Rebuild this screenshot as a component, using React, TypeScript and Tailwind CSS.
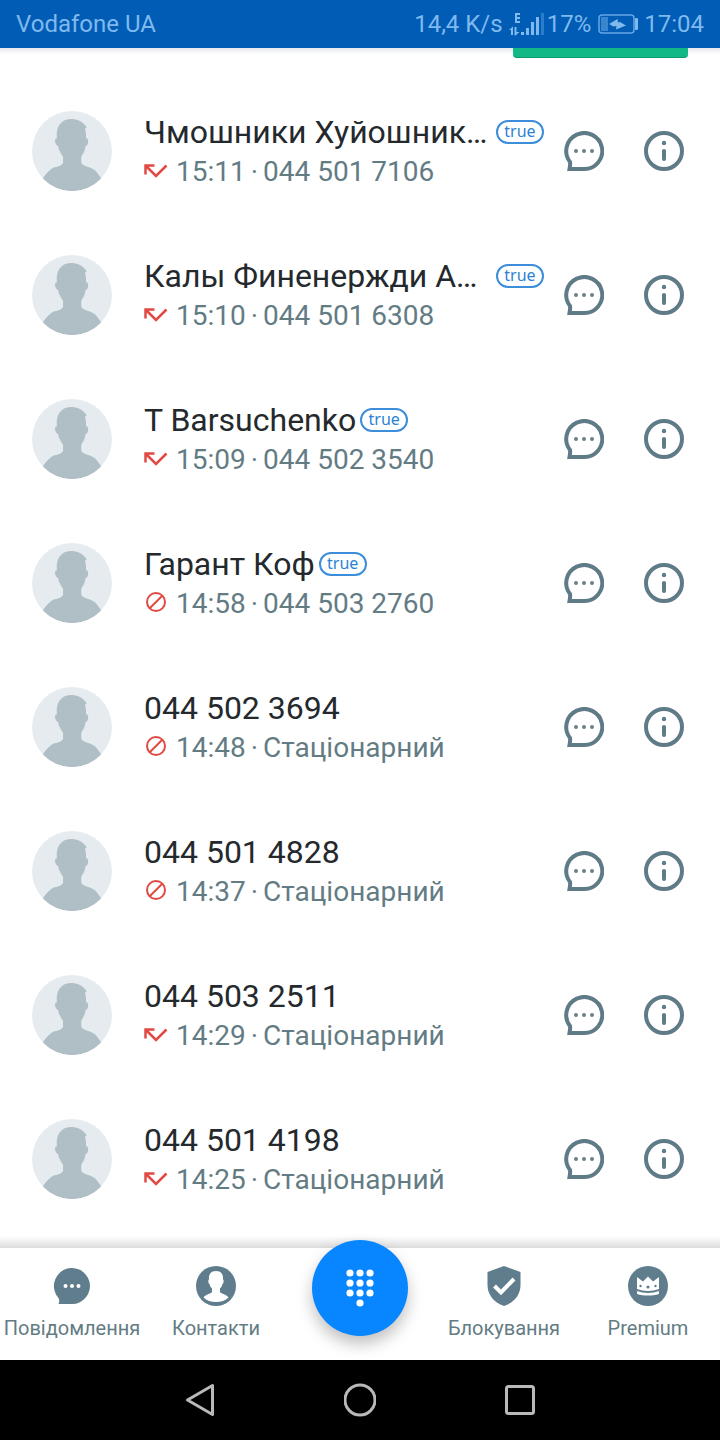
import type { ReactNode } from "react";

type CallKind = "missed" | "blocked";

interface Call {
  id: number;
  name: string;
  verified?: boolean;
  kind: CallKind;
  time: string;
  detail: string;
}

const calls: Call[] = [
  { id: 1, name: "Чмошники Хуйошник…", verified: true, kind: "missed", time: "15:11", detail: "044 501 7106" },
  { id: 2, name: "Калы Финенержди А…", verified: true, kind: "missed", time: "15:10", detail: "044 501 6308" },
  { id: 3, name: "T Barsuchenko", verified: true, kind: "missed", time: "15:09", detail: "044 502 3540" },
  { id: 4, name: "Гарант Коф", verified: true, kind: "blocked", time: "14:58", detail: "044 503 2760" },
  { id: 5, name: "044 502 3694", kind: "blocked", time: "14:48", detail: "Стаціонарний" },
  { id: 6, name: "044 501 4828", kind: "blocked", time: "14:37", detail: "Стаціонарний" },
  { id: 7, name: "044 503 2511", kind: "missed", time: "14:29", detail: "Стаціонарний" },
  { id: 8, name: "044 501 4198", kind: "missed", time: "14:25", detail: "Стаціонарний" },
];

const PERSON_PATH =
  "M39 8C45 8 50 10 54.700 16L53 18C54 21 54 24 54 27C57 27 57 34 53.500 35C53 40 51 43 49.300 45.500V52C52 56 57 55.500 61 58C64.500 60 67 64 69 67.600A40 40 0 0 1 11 67.600C13 64 16 60 20 57.500C23 55.500 29 56 31 52V45.500C29 43 27 40 26 35C22.500 34 22 27 25 27C24.500 24 24.500 21 25.500 18C27.500 12 32 8 39 8z";

export default function App() {
  return (
    <div className="flex min-h-screen flex-col bg-white font-['Roboto',sans-serif]">
      <StatusBar />
      <main className="flex-1">
        <div className="flex h-[31px] items-start justify-end bg-linear-to-b from-gray-200 to-white to-20% pr-8">
          <button
            aria-label="Premium"
            className="h-[10px] w-[175px] rounded-b-sm border-b border-[#0a9a6d] bg-[#12b886]"
          />
        </div>
        <ul>
          {calls.map((call) => (
            <CallRow key={call.id} call={call} />
          ))}
        </ul>
      </main>
      <div className="h-3 bg-linear-to-b from-white to-[#dcdcdc]" />
      <TabBar />
      <SystemBar />
    </div>
  );
}

function StatusBar() {
  return (
    <header className="flex h-12 items-center justify-between bg-[#005cb5] px-4 text-2xl text-[#7fb9ee]">
      <span>Vodafone UA</span>
      <div className="flex items-center gap-1.5">
        <span>14,4 K/s</span>
        <div className="flex items-center gap-0.5">
          <svg width="36" height="24" viewBox="0 0 36 24" fill="currentColor">
            <path d="M6 1h5v2H8v2h3v2H8v2h3v2H6z" />
            <path d="M0 18l4-3.500V23H2v-5zM5.500 15h2v5h3l-4 3.500h-1zM12 20h3v3h-3zM17 16h3v7h-3zM22 10h3v13h-3zM27 5h3v18h-3z" />
            <path d="M32 1h3v22h-3z" opacity="0.35" />
          </svg>
          <span>17%</span>
        </div>
        <svg width="41" height="22" viewBox="0 0 41 22" fill="currentColor">
          <rect x="2" y="2" width="35" height="18" rx="3" fill="none" stroke="currentColor" strokeWidth="1.500" opacity="0.8" />
          <rect x="4" y="4" width="7" height="14" opacity="0.45" />
          <path d="M12 11L20.500 6l.500 3.500 2-.500 6 3.500-10 4 .500-3.500-3 .500z" />
          <rect x="38" y="5" width="3" height="12" rx="1" />
        </svg>
        <span>17:04</span>
      </div>
    </header>
  );
}

function CallRow({ call }: { call: Call }) {
  // shortened names fill the line, so their badge sits at its end
  const isCut = call.name.endsWith("…");

  return (
    <li className="flex h-36 items-center pr-4 pl-8">
      <Avatar />
      <div className="ml-8 min-w-0 flex-1 pb-0.5">
        <div className="flex items-center gap-1">
          <span
            className={`min-w-0 whitespace-nowrap text-[32px] leading-10 text-[#24292d] ${
              isCut ? "flex-1" : ""
            }`}
          >
            {call.name}
          </span>
          {call.verified && (
            <span className="flex h-6 w-12 shrink-0 items-center justify-center rounded-full border-2 border-[#3c8edb] pb-0.5 font-['Noto_Sans',sans-serif] text-base leading-4 text-[#2c82d3]">
              true
            </span>
          )}
        </div>
        <p className="mt-1 flex items-center gap-2 text-[28px] leading-8 whitespace-nowrap text-[#637c84]">
          {call.kind === "missed" ? <MissedIcon /> : <BlockedIcon />}
          <span className="flex gap-[5px]">
            <span>{call.time}</span>
            <span>·</span>
            <span>{call.detail}</span>
          </span>
        </p>
      </div>
      <button aria-label="Повідомлення" className="flex size-20 items-center justify-center">
        <svg width="40" height="40" viewBox="0 0 40 40" fill="none">
          <path
            d="M20 38H5.500c.500-3 1-5 .500-7A18 18 0 1 1 20 38z"
            stroke="#5f7b87"
            strokeWidth="4"
          />
          <g fill="#6b7f88">
            <circle cx="12" cy="20" r="2" />
            <circle cx="20" cy="20" r="2" />
            <circle cx="28" cy="20" r="2" />
          </g>
        </svg>
      </button>
      <button aria-label="Інформація" className="flex size-20 items-center justify-center">
        <svg width="40" height="40" viewBox="0 0 40 40" fill="none">
          <circle cx="20" cy="20" r="18" stroke="#5f7b87" strokeWidth="4" />
          <circle cx="20" cy="12" r="2.200" fill="#5f7b87" />
          <path d="M20 20v8" stroke="#5f7b87" strokeWidth="4" strokeLinecap="round" />
        </svg>
      </button>
    </li>
  );
}

function Avatar() {
  return (
    <svg className="size-20 shrink-0" viewBox="0 0 80 80">
      <circle cx="40" cy="40" r="40" fill="#e5ebef" />
      <path d={PERSON_PATH} fill="#b0bec6" />
    </svg>
  );
}

function MissedIcon() {
  return (
    <svg className="w-6 shrink-0" height="24" viewBox="0 0 24 24" fill="none" stroke="#e04a43" strokeWidth="2.500">
      <path d="M1.500 14.500V5.500H10.500M2 6l10 10L22.500 5.500" />
    </svg>
  );
}

function BlockedIcon() {
  return (
    <svg className="w-6 shrink-0" height="24" viewBox="0 0 24 24" fill="none" stroke="#e04a43" strokeWidth="2">
      <circle cx="12" cy="10" r="9" />
      <path d="M5.500 16.500l13-13" />
    </svg>
  );
}

function TabBar() {
  return (
    <nav className="grid h-28 grid-cols-5 bg-white text-[#637c84]">
      <Tab label="Повідомлення">
        <path d="M20 38H6.500c1-2 1-4 0-6A18 18 0 1 1 20 38z" fill="#5f7d8c" />
        <g fill="white">
          <circle cx="13.500" cy="20" r="2" />
          <circle cx="20" cy="20" r="2" />
          <circle cx="26.500" cy="20" r="2" />
        </g>
      </Tab>
      <Tab label="Контакти">
        <circle cx="20" cy="20" r="20" fill="#5f7d8c" />
        <path
          d="M20 5c5 0 7.500 3 7 8.500 1 0 1 4-.500 4.500-.500 2-1.500 3.500-2.500 4.500v3.500c1.500 2 6 2 8.500 5.500-3 3-7.500 4.500-12.500 4.500s-9.500-1.500-12.500-4.500c2.500-3.500 7-3.500 8.500-5.500v-3.500c-1-1-2-2.500-2.500-4.500-1.500-.500-1.500-4.500-.500-4.500C12.500 8 15 5 20 5z"
          fill="white"
        />
      </Tab>
      <div className="flex justify-center">
        <button
          aria-label="Набір номера"
          className="-mt-2 flex size-24 items-center justify-center rounded-full bg-[#0886ff] shadow-[0_8px_16px_rgba(0,0,0,0.25)]"
        >
          <svg width="30" height="40" viewBox="0 0 30 40" fill="white">
            {[5, 15, 25].map((cx) =>
              [5, 15, 25].map((cy) => <circle key={`${cx}-${cy}`} cx={cx} cy={cy} r="3.6" />)
            )}
            <circle cx="15" cy="35" r="3.6" />
          </svg>
        </button>
      </div>
      <Tab label="Блокування">
        <path d="M20 0l16.500 6v13c0 10-6.500 17.500-16.500 21C10 36.500 3.500 29 3.500 19V6z" fill="#5f7d8c" />
        <path d="M10.500 20l6.500 6.500L30 13" fill="none" stroke="white" strokeWidth="4" />
      </Tab>
      <Tab label="Premium">
        <circle cx="20" cy="20" r="20" fill="#5f7d8c" />
        <path d="M9 11l6 4.500 5-5 5 5 6-4.500v12c-7 2.500-15 2.500-22 0zM9 25c7 2.500 15 2.500 22 0v3c-7 2-15 2-22 0z" fill="white" />
        <g fill="#5f7d8c">
          <circle cx="12.500" cy="20" r="1.200" />
          <circle cx="20" cy="21" r="1.600" />
          <circle cx="27.500" cy="20" r="1.200" />
        </g>
      </Tab>
    </nav>
  );
}

function Tab({ label, children }: { label: string; children: ReactNode }) {
  return (
    <a href="#" className="flex flex-col items-center gap-2 pt-[18px] whitespace-nowrap">
      <svg width="40" height="40" viewBox="0 0 40 40">
        {children}
      </svg>
      <span className="text-xl leading-7">{label}</span>
    </a>
  );
}

function SystemBar() {
  return (
    <footer className="flex h-20 items-center justify-center gap-32 bg-black">
      <button aria-label="Назад">
        <svg width="32" height="34" viewBox="0 0 32 34" fill="none" stroke="#b9b9b9" strokeWidth="3" strokeLinejoin="round">
          <path d="M28.500 2.500v29L3.500 17z" />
        </svg>
      </button>
      <button aria-label="Головний екран">
        <svg width="32" height="34" viewBox="0 0 32 34" fill="none" stroke="#b9b9b9" strokeWidth="3">
          <circle cx="16" cy="17" r="15" />
        </svg>
      </button>
      <button aria-label="Останні">
        <svg width="32" height="34" viewBox="0 0 32 34" fill="none" stroke="#b9b9b9" strokeWidth="3">
          <rect x="2.500" y="3.500" width="27" height="27" rx="2" />
        </svg>
      </button>
    </footer>
  );
}
